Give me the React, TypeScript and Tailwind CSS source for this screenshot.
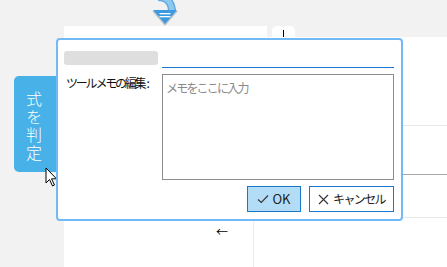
import React from 'react';

const FONT = { fontFamily: '"Meiryo UI", "Noto Sans CJK JP", "Noto Sans", sans-serif' };

function FlowArrow() {
  return (
    <svg width="30" height="28" viewBox="0 0 30 28" className="absolute left-[150px] top-0">
      <path d="M8 -3 C 17 -3, 22 3, 22 12" fill="none" stroke="#6aa9dc" strokeWidth="8" />
      <path d="M8 -3 C 17 -3, 22 3, 22 12" fill="none" stroke="#8ccaf2" strokeWidth="5" />
      <path d="M2 11 L 28 11 L 15 26 Z" fill="#c4c4c4" />
      <path d="M3 10 L 27 10 L 15 24 Z" fill="#3c9ae0" />
      <rect x="9.5" y="13" width="11" height="1.3" fill="#fff" />
      <rect x="9.5" y="16" width="11" height="1.3" fill="#fff" />
    </svg>
  );
}

function Cursor() {
  return (
    <svg width="14" height="20" viewBox="0 0 14 20" className="absolute left-[45px] top-[167px]">
      <path d="M1 1 L1 16 L4.5 12.5 L7.5 19 L9.5 18 L6.5 11.8 L11.5 11.8 Z" fill="#fff" stroke="#000" strokeWidth="1" strokeLinejoin="miter" />
    </svg>
  );
}

export default function App() {
  return (
    <div className="relative w-[447px] h-[267px] overflow-hidden bg-[#f2f2f2]" style={FONT}>
      {/* canvas pieces */}
      <div className="absolute left-[64px] top-[26px] w-[203px] h-[241px] bg-white" />
      <div className="absolute left-[272px] top-[26px] w-[23px] h-[14px] bg-white rounded-t-[5px]">
        <div className="absolute left-[6px] top-[11px] w-[12px] h-px bg-black" />
        <div className="absolute left-[11px] top-[4px] w-px h-[8px] bg-black" />
      </div>
      <div className="absolute left-[253px] top-[37px] w-[194px] h-[230px] bg-white border-l border-[#ececec] flex flex-col">
        <div className="h-[89px] border-b border-[#e8e8e8]" />
        <div className="h-[49px] border-b border-[#a9a9a9]" />
        <div className="h-[43px] border-b border-[#e8e8e8]" />
      </div>
      <div className="absolute left-[216px] top-[226px] text-[12px] leading-none text-black">←</div>

      <FlowArrow />

      {/* left node tab */}
      <div className="absolute left-[14px] top-[76px] w-[44px] h-[96px] bg-[#47b1e8] rounded-l-[5px] flex justify-center pt-[15px] pr-[4px] text-white text-[16px] font-light">
        <span className="[writing-mode:vertical-rl] leading-[18px] tracking-[2px]">式を判定</span>
      </div>
      <Cursor />

      {/* dialog */}
      <div className="absolute left-[56px] top-[38px] w-[347px] h-[183px] bg-white border-2 border-[#72b9f6] rounded-[4px] pt-[11px] pl-[6px] pr-[7px] pb-[7px] flex flex-col">
        <div className="grid grid-cols-[94px_232px] gap-x-[4px]">
          <div className="h-[14px] bg-[#dedede] rounded-[3px]" />
          <div className="h-[17px] border-b border-[#1976d2]" />
        </div>
        <div className="grid grid-cols-[94px_232px] gap-x-[4px] mt-[6px]">
          <div className="pl-[2px] pt-[1px] text-[12px] leading-[16px] text-[#111] whitespace-nowrap">
            <span className="tracking-[-2.2px]">ツールメモの編集</span>
            <span className="ml-[2px]">:</span>
          </div>
          <div className="h-[106px] border border-[#8c8c8c] px-[3px] pt-[5px] text-[12px] leading-[16px] text-[#8a8a8a] tracking-[-1.8px] whitespace-nowrap">メモをここに入力</div>
        </div>
        <div className="flex justify-end gap-[8px] mt-[6px]">
          <button className="w-[54px] h-[26px] bg-[#b3dcf6] border border-[#1a78cc] flex items-center justify-center gap-[3px] text-[13px] text-[#222]">
            <svg width="12" height="12" viewBox="0 0 12 12"><path d="M1 6.5 L4.3 9.5 L11 2.5" fill="none" stroke="#333" strokeWidth="1.1" /></svg>
            <span>OK</span>
          </button>
          <button className="w-[85px] h-[26px] bg-white border border-[#1a78cc] flex items-center justify-center gap-[4px] text-[12px] text-[#222]">
            <svg width="11" height="11" viewBox="0 0 11 11"><path d="M1 1 L10 10 M10 1 L1 10" fill="none" stroke="#333" strokeWidth="1.1" /></svg>
            <span className="tracking-[-1.6px]">キャンセル</span>
          </button>
        </div>
      </div>
    </div>
  );
}
